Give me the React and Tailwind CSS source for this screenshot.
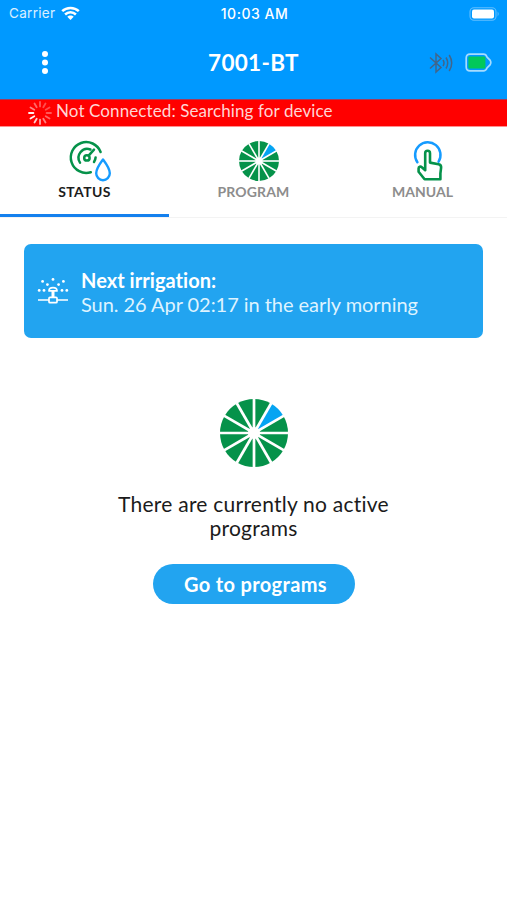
import React from "react";

function Wheel({ size }) {
  const slices = Array.from({ length: 12 }, (_, i) => i);
  const point = (deg, r) => {
    const a = (deg * Math.PI) / 180;
    return `${(50 + r * Math.sin(a)).toFixed(2)} ${(50 - r * Math.cos(a)).toFixed(2)}`;
  };
  return (
    <svg width={size} height={size} viewBox="0 0 100 100">
      {slices.map((i) => (
        <path
          key={i}
          d={`M50 50L${point(i * 30, 50)}A50 50 0 0 1 ${point(i * 30 + 30, 50)}Z`}
          fill={i === 1 ? "#05a4f2" : "#05924a"}
        />
      ))}
      {slices.map((i) => (
        <path key={i} d={`M50 50L${point(i * 30, 51)}`} stroke="#fff" strokeWidth="4" />
      ))}
      <circle cx="50" cy="50" r="9" fill="#fff" />
    </svg>
  );
}

function GaugeIcon() {
  return (
    <svg width="44" height="44" viewBox="0 0 44 44" fill="none" stroke="#05924a" strokeWidth="2.5" strokeLinecap="round">
      <path d="M22.8 33.2A15.4 15.4 0 1 1 32.6 13" />
      <path d="M12 23.6A8.8 8.8 0 0 1 22.4 10.5" />
      <path d="M27.6 18.4A9 9 0 0 1 26 23" />
      <circle cx="18.9" cy="18.9" r="2.7" />
      <path d="M20.6 16.6L26 10.6" />
      <path
        d="M35 20.4C32.3 24 28.2 29.2 28.2 34.2A6.8 7 0 0 0 41.8 34.2C41.8 29.2 37.7 24 35 20.4Z"
        stroke="#159bff"
        strokeWidth="2.4"
        strokeLinejoin="round"
      />
    </svg>
  );
}

function TouchIcon() {
  return (
    <svg width="32" height="44" viewBox="0 0 32 44" fill="none" strokeLinejoin="round" strokeLinecap="round">
      <path d="M5.4 23.2A12.7 12.7 0 1 1 26.6 22.6" stroke="#159bff" strokeWidth="2.5" />
      <path
        d="M13.2 28.6V14.2A2.4 2.4 0 0 1 18 14.2V23.6L26.6 25.2A3.2 3.2 0 0 1 29.1 28.6L28.4 34.4V40.3H12.6L6.6 32.8V29.6C6.6 27.6 8.6 27.2 9.8 28.2L13.2 31.2Z"
        stroke="#05924a"
        strokeWidth="2.6"
        fill="#fff"
      />
    </svg>
  );
}

function Spinner() {
  return (
    <svg width="26" height="26" viewBox="0 0 26 26" stroke="#fff" strokeWidth="1.8" strokeLinecap="round">
      {Array.from({ length: 12 }, (_, i) => (
        <path
          key={i}
          d="M13 2V6.4"
          transform={`rotate(${i * 30} 13 13)`}
          opacity={[0.35, 0.3, 0.3, 0.35, 0.4, 0.5, 0.65, 0.8, 0.95, 0.95, 0.5, 0.4][i]}
        />
      ))}
    </svg>
  );
}

function SprinklerIcon() {
  const drops = [[16, 2.4], [5.6, 4.4], [26.4, 4.4], [10.4, 7.6], [21.6, 7.6], [2.2, 13.4], [7, 13.4], [25, 13.4], [29.8, 13.4]];
  return (
    <svg width="32" height="28" viewBox="0 0 32 28" fill="none" stroke="#fff" strokeWidth="1.7">
      {drops.map(([x, y]) => (
        <circle key={`${x}-${y}`} cx={x} cy={y} r="1.4" fill="#fff" stroke="none" />
      ))}
      <path d="M12 13.9C12 9.6 20 9.6 20 13.9Z" strokeLinejoin="round" />
      <path d="M16 14V20" strokeWidth="3" />
      <path d="M1 23H12M20 23H31" />
      <rect x="12" y="20.3" width="8" height="5.4" rx="1" />
    </svg>
  );
}

function Tab({ label, icon, active, spacing }) {
  return (
    <button
      className={`flex h-full flex-1 flex-col items-center border-b-[3px] pt-[11px] ${active ? "border-[#1480ee] text-[#1c1c1c]" : "border-transparent text-[#8d8d8d]"}`}
    >
      <span className="flex h-[45px] items-center justify-center pl-[11px]">{icon}</span>
      <span className={`pt-px text-[14px] leading-4 font-bold ${spacing}`}>{label}</span>
    </button>
  );
}

export default function App() {
  return (
    <div className="flex h-[900px] w-[507px] flex-col overflow-hidden bg-white font-['Lato',sans-serif] [font-variant-ligatures:none]">
      <header className="h-[99px] shrink-0 bg-[#0099ff] text-white">
        <div className="grid h-7 grid-cols-3 items-center pr-[7px] pl-[9px] font-['Inter',sans-serif]">
          <div className="flex items-center gap-[6px] pb-px text-[13.5px] text-white/85">
            <span className="tracking-[0.3px]">Carrier</span>
            <svg width="19" height="15" viewBox="0 0 19 15" fill="none" stroke="#fff" strokeWidth="2.5">
              <path d="M1.2 5.2C5.7 .8 13.3 .8 17.8 5.2" />
              <path d="M4.1 8.5C7.2 5.5 11.8 5.5 14.9 8.5" />
              <path d="M9.5 14L6.3 10.8C8 9.1 11 9.1 12.7 10.8Z" fill="#fff" stroke="none" />
            </svg>
          </div>
          <div className="pb-px text-center text-[14px] font-medium tracking-[0.5px] whitespace-nowrap">10:03 AM</div>
          <svg className="justify-self-end" width="31" height="14" viewBox="0 0 31 14">
            <rect x="1" y=".7" width="26" height="12.6" rx="4" fill="none" stroke="#62bfff" strokeWidth="1.1" />
            <rect x="3" y="2.6" width="22" height="8.8" rx="2" fill="#fff" />
            <path d="M28.6 4.6Q30.8 7 28.6 9.4Z" fill="#62bfff" />
          </svg>
        </div>
        <div className="grid h-[69px] grid-cols-3 items-center pr-[15px] pl-[41px]">
          <svg width="8" height="24" viewBox="0 0 8 24" fill="#fff">
            <circle cx="4" cy="3" r="3" />
            <circle cx="4" cy="11.5" r="3" />
            <circle cx="4" cy="20" r="3" />
          </svg>
          <h1 className="-ml-[26px] text-center text-[22.5px] leading-7 font-bold tracking-[0.3px] whitespace-nowrap">7001-BT</h1>
          <div className="flex items-center justify-end gap-[11px]">
            <svg width="26" height="22" viewBox="0 0 26 22" fill="none" stroke="#42658a" strokeWidth="1.5">
              <path d="M2 5.5L13 15.5L8 20V2L13 6.5L2 16.5" />
              <path d="M15 8Q17 11 15 14M18 5.5Q21.4 11 18 16.5M21.2 3Q26.2 11 21.2 19" />
            </svg>
            <svg width="27" height="19" viewBox="0 0 27 19">
              <path d="M5 1.2H18.5Q21 1.2 22 4L25.2 7.3Q26.4 9.5 25.2 11.7L22 15Q21 17.8 18.5 17.8H5Q1.2 17.8 1.2 14V5Q1.2 1.2 5 1.2Z" fill="none" stroke="#a5dcff" strokeWidth="1.7" />
              <rect x="3.4" y="3.4" width="17" height="12.2" rx="1" fill="#02c85a" />
            </svg>
          </div>
        </div>
      </header>

      <div className="flex h-[28px] shrink-0 items-center gap-[3px] border-t border-b border-t-[#a33b5c] border-b-[#ff8f8f] bg-[#ff0000] pl-[27px] text-[#ffd5d5]">
        <Spinner />
        <span className="pb-[4px] text-[17px] leading-5 tracking-[0.1px] whitespace-nowrap">Not Connected: Searching for device</span>
      </div>

      <nav className="flex h-[91px] shrink-0 border-b border-[#f3f3f3]">
        <Tab label="STATUS" icon={<GaugeIcon />} active spacing="tracking-[0.35px]" />
        <Tab label="PROGRAM" icon={<Wheel size={40} />} spacing="tracking-[0.15px]" />
        <Tab label="MANUAL" icon={<TouchIcon />} spacing="tracking-[0px]" />
      </nav>

      <main className="flex flex-col items-center pt-[26px]">
        <section className="flex h-[94px] w-[459px] items-center rounded-[7px] bg-[#22a4f0] pl-[13px] text-white">
          <SprinklerIcon />
          <div className="ml-[12px] pt-[2px] text-[20px] leading-6 whitespace-nowrap">
            <p className="font-bold tracking-[0.05px]">Next irrigation:</p>
            <p className="tracking-[-0.05px] text-[#def3ff]">Sun. 26 Apr 02:17 in the early morning</p>
          </div>
        </section>
        <div className="mt-[61px]">
          <Wheel size={68} />
        </div>
        <p className="mt-[25px] w-[300px] text-center text-[21px] leading-6 tracking-[0.24px] text-[#1b1b1b]">
          There are currently no active programs
        </p>
        <button className="mt-6 flex h-[40px] w-[202px] items-center justify-center rounded-full bg-[#22a4f0] pb-px pl-1 text-[20px] leading-6 font-bold tracking-[0.35px] text-white">
          Go to programs
        </button>
      </main>
    </div>
  );
}
